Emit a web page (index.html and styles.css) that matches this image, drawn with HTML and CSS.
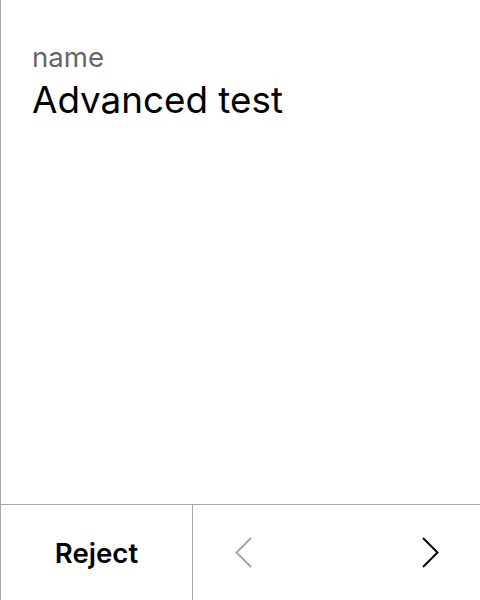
FILE: index.html
```html
<!DOCTYPE html>
<html>
<head>
<meta charset="utf-8">
<link rel="stylesheet" href="styles.css">
</head>
<body>
<div class="panel">
  <div class="content">
    <div class="label">name</div>
    <div class="value">Advanced test</div>
  </div>
  <div class="footer">
    <button class="reject">Reject</button>
    <div class="nav">
      <button class="arrow prev" aria-label="Previous">
        <svg width="18" height="32" viewBox="0 0 18 32"><path d="M16 1 L1.5 15.5 L16 30" fill="none" stroke="#a6a6a6" stroke-width="2"/></svg>
      </button>
      <button class="arrow next" aria-label="Next">
        <svg width="18" height="32" viewBox="0 0 18 32"><path d="M2 1 L16.5 15.5 L2 30" fill="none" stroke="#000" stroke-width="2"/></svg>
      </button>
    </div>
  </div>
</div>
</body>
</html>
```
FILE: styles.css
```css
html, body { margin: 0; padding: 0; background: #fff; }
body { font-family: Inter, "Noto Sans", sans-serif; }
.panel {
  width: 480px; height: 600px; box-sizing: border-box;
  border-left: 1px solid #a9a9a9;
  display: flex; flex-direction: column;
}
.content { flex: 1; padding: 40px 31px 0; }
.label { font-size: 27.6px; color: #666; line-height: 34px; }
.value { font-size: 36.8px; color: #000; line-height: 44px; margin-top: 4px; }
.footer {
  height: 95px; flex: none; border-top: 1px solid #a9a9a9;
  display: flex;
}
button { font-family: inherit; background: none; border: 0; padding: 0; cursor: pointer; }
.reject {
  width: 192px; border-right: 1px solid #a9a9a9;
  font-size: 27.6px; font-weight: 600; color: #000;
}
.nav { flex: 1; display: flex; justify-content: space-between; align-items: center; padding: 0 41px 0 42px; }
.arrow { display: flex; }
.arrow svg { display: block; }
```
